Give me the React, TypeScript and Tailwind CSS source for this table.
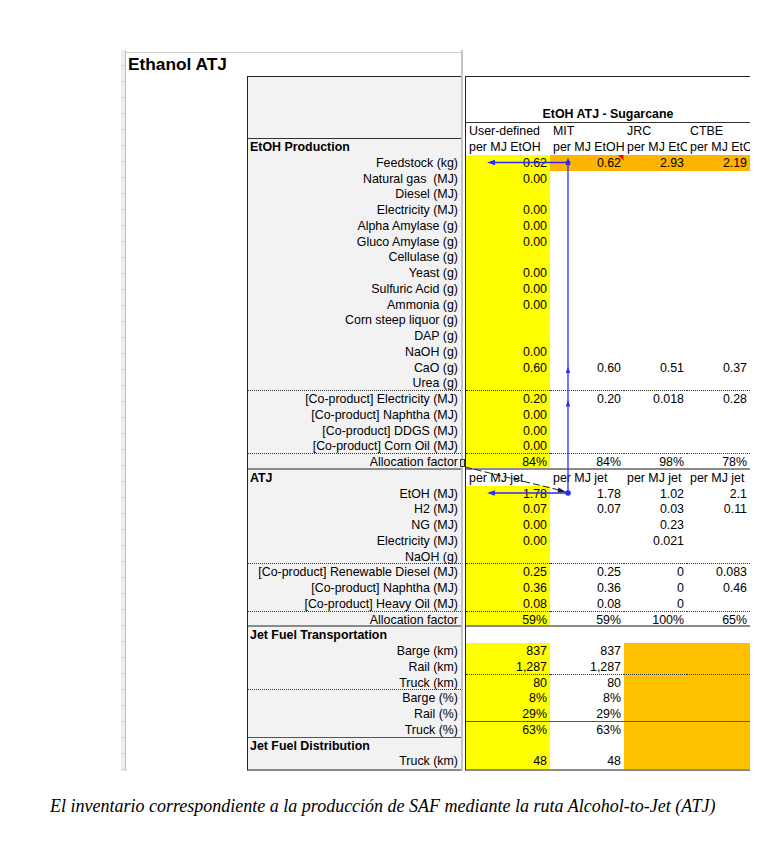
type Line = 'dot' | 'thick' | 'solid' | undefined;

interface Row {
  label: string;
  bold?: boolean;
  vals?: string[];
  head?: boolean;
  noYellow?: boolean;
  lb?: Line;
  rb?: Line;
  feed?: boolean;
  block?: boolean;
}

const rows: Row[] = [
  { label: 'Feedstock (kg)', vals: ['0.62', '0.62', '2.93', '2.19'], feed: true },
  { label: 'Natural gas  (MJ)', vals: ['0.00'] },
  { label: 'Diesel (MJ)' },
  { label: 'Electricity (MJ)', vals: ['0.00'] },
  { label: 'Alpha Amylase (g)', vals: ['0.00'] },
  { label: 'Gluco Amylase (g)', vals: ['0.00'] },
  { label: 'Cellulase (g)' },
  { label: 'Yeast (g)', vals: ['0.00'] },
  { label: 'Sulfuric Acid (g)', vals: ['0.00'] },
  { label: 'Ammonia (g)', vals: ['0.00'] },
  { label: 'Corn steep liquor (g)' },
  { label: 'DAP (g)' },
  { label: 'NaOH (g)', vals: ['0.00'] },
  { label: 'CaO (g)', vals: ['0.60', '0.60', '0.51', '0.37'] },
  { label: 'Urea (g)', lb: 'dot', rb: 'dot' },
  { label: '[Co-product] Electricity (MJ)', vals: ['0.20', '0.20', '0.018', '0.28'] },
  { label: '[Co-product] Naphtha (MJ)', vals: ['0.00'] },
  { label: '[Co-product] DDGS (MJ)', vals: ['0.00'] },
  { label: '[Co-product] Corn Oil (MJ)', vals: ['0.00'], lb: 'dot', rb: 'dot' },
  { label: 'Allocation factor', vals: ['84%', '84%', '98%', '78%'], lb: 'thick', rb: 'thick' },
  { label: 'ATJ', bold: true, head: true, noYellow: true },
  { label: 'EtOH (MJ)', vals: ['1.78', '1.78', '1.02', '2.1'] },
  { label: 'H2 (MJ)', vals: ['0.07', '0.07', '0.03', '0.11'] },
  { label: 'NG (MJ)', vals: ['0.00', '', '0.23', ''] },
  { label: 'Electricity (MJ)', vals: ['0.00', '', '0.021', ''] },
  { label: 'NaOH (g)', lb: 'dot', rb: 'dot' },
  { label: '[Co-product] Renewable Diesel (MJ)', vals: ['0.25', '0.25', '0', '0.083'] },
  { label: '[Co-product] Naphtha (MJ)', vals: ['0.36', '0.36', '0', '0.46'] },
  { label: '[Co-product] Heavy Oil (MJ)', vals: ['0.08', '0.08', '0', ''], lb: 'dot', rb: 'dot' },
  { label: 'Allocation factor', vals: ['59%', '59%', '100%', '65%'], lb: 'thick', rb: 'thick' },
  { label: 'Jet Fuel Transportation', bold: true, noYellow: true },
  { label: 'Barge (km)', vals: ['837', '837'], block: true },
  { label: 'Rail (km)', vals: ['1,287', '1,287'], rb: 'dot', block: true },
  { label: 'Truck (km)', vals: ['80', '80'], lb: 'dot', block: true },
  { label: 'Barge (%)', vals: ['8%', '8%'], block: true },
  { label: 'Rail (%)', vals: ['29%', '29%'], rb: 'solid', block: true },
  { label: 'Truck (%)', vals: ['63%', '63%'], lb: 'solid', block: true },
  { label: 'Jet Fuel Distribution', bold: true, block: true },
  { label: 'Truck (km)', vals: ['48', '48'], block: true },
];

const colW = ['w-[84px]', 'w-[74px]', 'w-[63px]', 'w-[63px]'];

function lineCls(l: Line) {
  if (l === 'dot') return 'border-b border-dotted border-[#333]';
  if (l === 'thick') return 'border-b-2 border-[#8a8a8a]';
  if (l === 'solid') return 'border-b border-[#555]';
  return '';
}

function cellBg(r: Row, i: number) {
  if (i === 0) return r.noYellow ? 'bg-white' : 'bg-[#ffff00]';
  if (r.feed) return 'bg-[#ffb400]';
  if (r.block && i >= 2) return 'bg-[#ffc000]';
  return 'bg-white';
}

function HeadRow({ items }: { items: string[] }) {
  return (
    <div className="flex h-[15.75px]">
      {items.map((t, i) => (
        <div key={i} className={`${colW[i]} shrink-0 overflow-hidden whitespace-nowrap pl-[3px] pt-[1px] leading-[15.75px]`}>
          {t}
        </div>
      ))}
    </div>
  );
}

function Overlay() {
  const blue = '#2a2aff';
  return (
    <svg className="pointer-events-none absolute left-0 top-0" width={783} height={853}>
      {/* feedstock trace */}
      <line x1={493} y1={162.5} x2={568} y2={162.5} stroke={blue} strokeWidth={1.3} />
      <polygon points="487,162.5 495,159.8 495,165.2" fill={blue} />
      <line x1={568} y1={160} x2={568} y2={493} stroke={blue} strokeWidth={1.3} />
      <polygon points="568,157.5 565.6,165 570.4,165" fill={blue} />
      <circle cx={568} cy={163} r={2.4} fill={blue} />
      <polygon points="568,366.5 565.8,373 570.2,373" fill={blue} />
      <polygon points="568,400 565.8,406.5 570.2,406.5" fill={blue} />
      {/* EtOH trace */}
      <line x1={493} y1={493} x2={568} y2={493} stroke={blue} strokeWidth={1.3} />
      <polygon points="487,493 495,490.3 495,495.7" fill={blue} />
      <circle cx={568} cy={493} r={2.8} fill={blue} />
      {/* off-sheet dashed trace */}
      <line x1={465} y1={467} x2={561} y2={490.5} stroke="#222" strokeWidth={1} strokeDasharray="7 3" />
      <polygon points="566,492 558.5,487.5 557.3,492.6" fill="#222" />
      <rect x={460.5} y={459.5} width={4} height={7} fill="#d8d8d8" stroke="#333" strokeWidth={1} />
      {/* comment marker */}
      <polygon points="618,155 623.5,155 623.5,160.5" fill="#ff0000" />
    </svg>
  );
}

export default function App() {
  return (
    <div className="relative h-[853px] w-[783px] overflow-hidden bg-white text-black font-['Liberation_Sans',Arial,sans-serif]">
      <div className="flex pt-[50px] pl-[121px]">
        {/* row-header strip */}
        <div className="h-[721px] w-[5px] border-r border-[#bdbdbd] bg-[repeating-linear-gradient(to_bottom,#eeeeee_0px,#eeeeee_15px,#d6d6d6_15px,#d6d6d6_16px)]" />

        {/* left column */}
        <div className="w-[335px] pt-[2px]">
          <div className="h-[24px] border-t border-[#cfcfcf] pl-[2px] pt-[1px] text-[17.3px] font-bold leading-[21px]">
            Ethanol ATJ
          </div>
          <div className="ml-[121px] w-[214px] border-l border-t border-b-2 border-l-[#222] border-t-[#222] border-b-[#8a8a8a] bg-[#f2f2f2] text-[12.4px]">
            <div className="h-[62px] border-b border-[#333]" />
            <div className="h-[15.75px] pl-[2px] pt-[1px] font-bold leading-[15.75px]">EtOH Production</div>
            {rows.map((r, i) => (
              <div
                key={i}
                className={`h-[15.75px] whitespace-pre pt-[1px] leading-[15.75px] ${lineCls(r.lb)} ${
                  r.bold ? 'pl-[2px] text-left font-bold' : 'pr-[3px] text-right'
                }`}
              >
                {r.label}
              </div>
            ))}
          </div>
        </div>

        {/* sheet gridline */}
        <div className="h-[721px] w-[2px] bg-[#c4c4c4]" />

        {/* right column */}
        <div className="w-[287px] pt-[26px]">
          <div className="ml-[2px] w-[285px] overflow-hidden border-l border-t border-b-2 border-l-[#222] border-t-[#222] border-b-[#8a8a8a] text-[12.4px]">
            <div className="flex h-[46.25px] items-end border-b border-[#333]">
              <div className="w-[284px] text-center font-bold leading-[15px]">EtOH ATJ - Sugarcane</div>
            </div>
            <HeadRow items={['User-defined', 'MIT', 'JRC', 'CTBE']} />
            <HeadRow items={['per MJ EtOH', 'per MJ EtOH', 'per MJ EtOH', 'per MJ EtOH']} />
            {rows.map((r, i) => (
              <div key={i} className="flex h-[15.75px]">
                {[0, 1, 2, 3].map((c) => (
                  <div
                    key={c}
                    className={`${colW[c]} ${cellBg(r, c)} ${lineCls(r.rb)} shrink-0 overflow-hidden whitespace-nowrap pt-[1px] leading-[15.75px] ${
                      r.head ? 'pl-[3px] text-left' : 'pr-[3px] text-right'
                    }`}
                  >
                    {r.head ? 'per MJ jet' : r.vals?.[c] ?? ''}
                  </div>
                ))}
              </div>
            ))}
          </div>
        </div>
      </div>

      <p className="mt-[25px] pl-[50px] text-left font-['Liberation_Serif','Times_New_Roman',serif] text-[18px] italic leading-[20px]">
        El inventario correspondiente a la producción de SAF mediante la ruta Alcohol-to-Jet (ATJ)
      </p>

      <Overlay />
    </div>
  );
}
